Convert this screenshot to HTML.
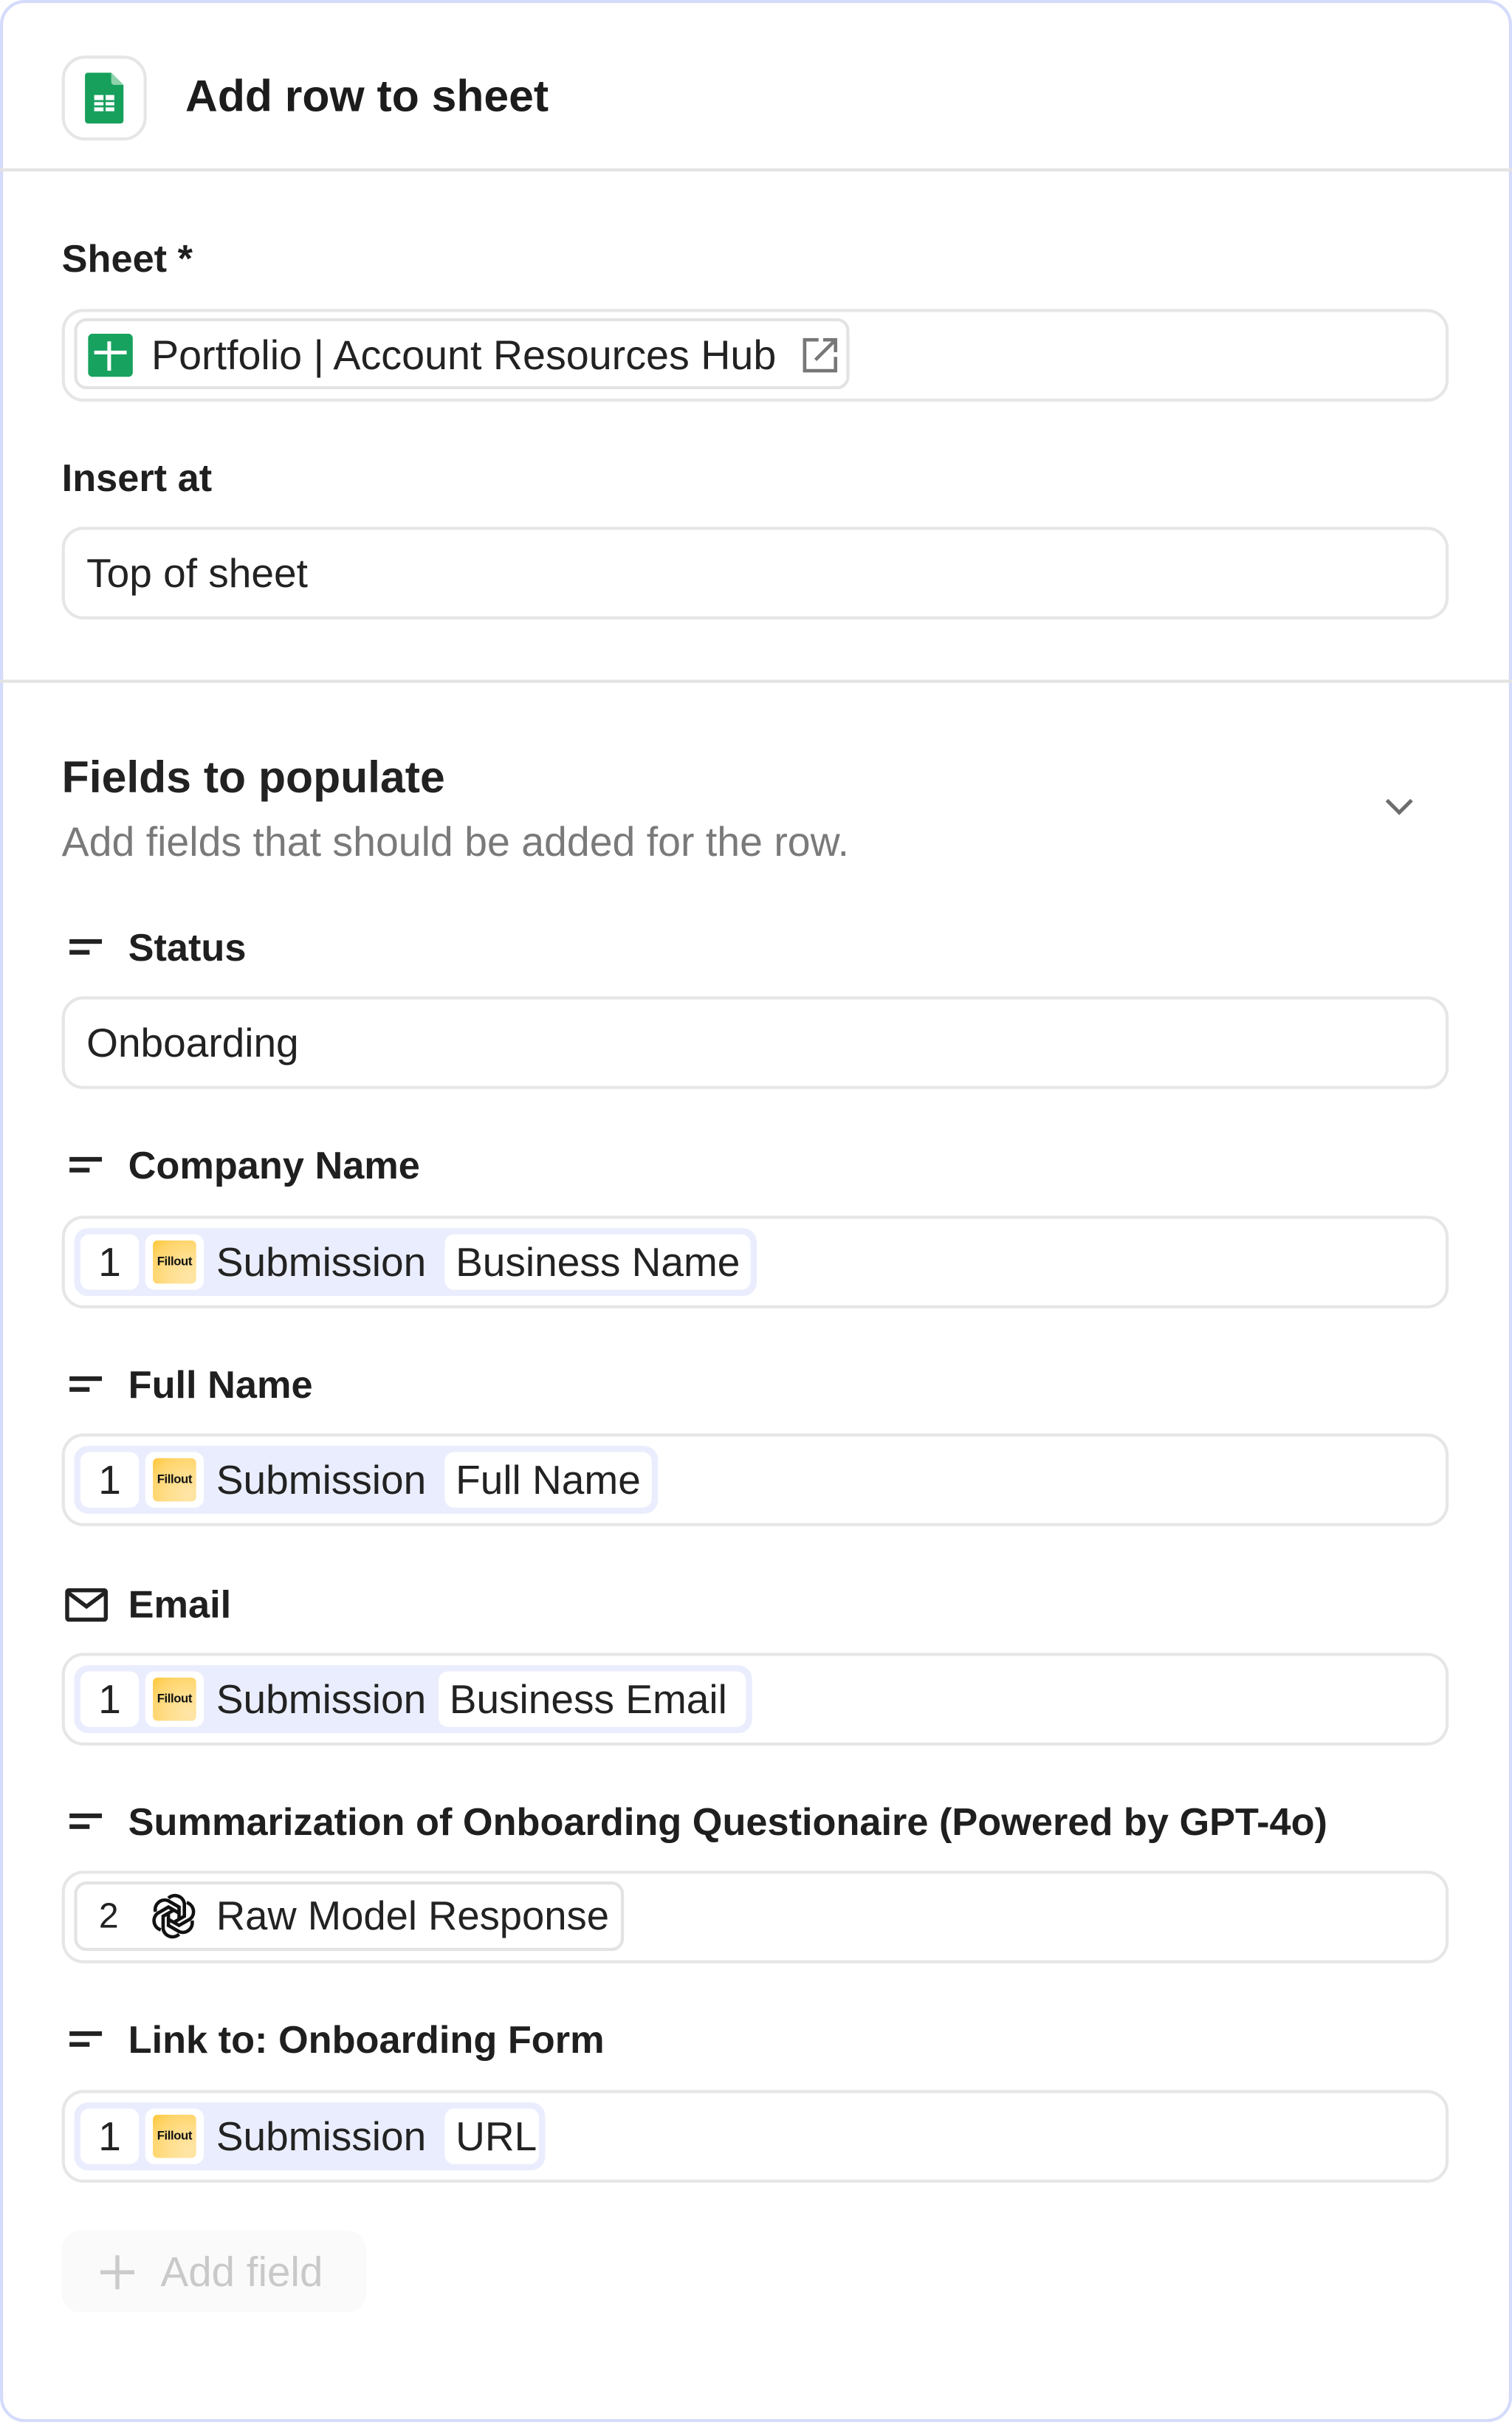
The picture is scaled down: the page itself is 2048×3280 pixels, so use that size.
<!DOCTYPE html>
<html><head><meta charset="utf-8">
<style>
html,body{margin:0;padding:0;background:#fff;width:2048px;height:3280px;overflow:hidden}
#w{position:absolute;left:0;top:0;width:979px;height:1568px;transform:scale(2.09193);transform-origin:0 0;font-family:"Liberation Sans",sans-serif;color:#1f1f1f}
.card{position:absolute;left:0;top:0;width:975px;height:1564px;border:2px solid #d4dbfb;border-radius:16px;background:#fff}
.a{position:absolute;white-space:nowrap}
.hr{position:absolute;left:0;width:979px;height:1.5px;background:#e3e3e3}
.lbl{position:absolute;left:40px;font-size:25px;font-weight:bold;line-height:30px;white-space:nowrap}
.flbl{position:absolute;left:83px;font-size:25px;font-weight:bold;line-height:30px;white-space:nowrap}
.inp{position:absolute;left:40px;width:894px;height:56px;border:2px solid #e6e6e6;border-radius:14px;background:#fff}
.itxt{position:absolute;left:14px;top:0;line-height:56px;font-size:26.3px;color:#222;white-space:nowrap}
.ic{position:absolute;left:45px}
.ic i{position:absolute;left:0;height:2.5px;background:#222;display:block}
.chip{position:absolute;left:6px;top:6px;height:44px;background:#eaedfd;border-radius:9px}
.wb{position:absolute;top:4px;height:36px;background:#fff;border-radius:6px;font-size:26.3px;line-height:36px;color:#222;white-space:nowrap}
.fo{position:absolute;left:5px;top:4px;width:28px;height:28px;border-radius:3px;background:radial-gradient(circle at 85% 85%,#ffe6a8 0,#ffdf8e 40%,#ffd46a 75%,#ffc838 100%);font-size:8px;font-weight:bold;color:#111;text-align:center;line-height:28px;letter-spacing:-0.2px}
.sub{position:absolute;font-size:26.3px;line-height:44px;color:#222;top:0;white-space:nowrap}
</style></head><body>
<div id="w">
<div class="card"></div>
<div class="a" style="left:40px;top:36px;width:51px;height:51px;border:2px solid #e6e6e6;border-radius:15px"></div>
<svg class="a" style="left:55px;top:47px" width="25" height="33" viewBox="0 0 25 33">
<path d="M2 0H17L25 8V31a2 2 0 0 1-2 2H2a2 2 0 0 1-2-2V2a2 2 0 0 1 2-2z" fill="#16a05c"/>
<path d="M17 0V6a2 2 0 0 0 2 2H25z" fill="#8ed1ab"/>
<rect x="6" y="14.5" width="13" height="10.5" fill="#fff"/>
<g fill="#16a05c"><rect x="12" y="14.5" width="1.4" height="10.5"/><rect x="6" y="17.8" width="13" height="1.3"/><rect x="6" y="21.2" width="13" height="1.3"/></g>
</svg>
<div class="a" style="left:120px;top:45px;font-size:29px;font-weight:bold;line-height:36px;color:#1c1c1c">Add row to sheet</div>
<div class="hr" style="top:109px"></div>
<div class="lbl" style="top:153px">Sheet *</div>
<div class="inp" style="top:200px">
 <div class="a" style="left:6px;top:4px;width:498px;height:42px;border:2px solid #e3e3e3;border-radius:8px"></div>
 <svg class="a" style="left:15px;top:14px" width="29" height="28" viewBox="0 0 29 28"><rect width="29" height="28" rx="3" fill="#17a25f"/><rect x="4" y="11" width="21" height="2.4" fill="#fff"/><rect x="12.5" y="5" width="2.4" height="19" fill="#fff"/></svg>
 <div class="a" style="left:56px;top:0;line-height:56px;font-size:26.6px;color:#222">Portfolio | Account Resources Hub</div>
 <svg class="a" style="left:477px;top:16px" width="24" height="24" viewBox="0 0 24 24" fill="none" stroke="#777" stroke-width="2.2"><path d="M11 2H2V22H22V13"/><path d="M9 15L22 2M14 2H22V10"/></svg>
</div>
<div class="lbl" style="top:295px">Insert at</div>
<div class="inp" style="top:341px"><div class="itxt">Top of sheet</div></div>
<div class="hr" style="top:440px"></div>
<div class="a" style="left:40px;top:486px;font-size:29px;font-weight:bold;line-height:36px;color:#222">Fields to populate</div>
<div class="a" style="left:40px;top:530px;font-size:26.5px;line-height:30px;color:#7a7a7a">Add fields that should be added for the row.</div>
<svg class="a" style="left:895px;top:514px" width="22" height="16" viewBox="0 0 22 16"><path d="M3 4L11 12L19 4" fill="none" stroke="#6d6d6d" stroke-width="2.4"/></svg>

<div class="ic" style="top:608px"><i style="top:0;width:21px"></i><i style="top:7px;width:13px"></i></div>
<div class="flbl" style="top:599px">Status</div>
<div class="inp" style="top:645px"><div class="itxt">Onboarding</div></div>

<div class="ic" style="top:749px"><i style="top:0;width:21px"></i><i style="top:7px;width:13px"></i></div>
<div class="flbl" style="top:740px">Company Name</div>
<div class="inp" style="top:787px">
 <div class="chip" style="width:442px">
  <div class="wb" style="left:4px;width:38px;text-align:center">1</div>
  <div class="wb" style="left:46px;width:38px"><div class="fo">Fillout</div></div>
  <div class="sub" style="left:92px">Submission</div>
  <div class="wb" style="left:240px;width:198px"><span style="position:absolute;left:7px">Business Name</span></div>
 </div>
</div>

<div class="ic" style="top:891px"><i style="top:0;width:21px"></i><i style="top:7px;width:13px"></i></div>
<div class="flbl" style="top:882px">Full Name</div>
<div class="inp" style="top:928px">
 <div class="chip" style="width:378px">
  <div class="wb" style="left:4px;width:38px;text-align:center">1</div>
  <div class="wb" style="left:46px;width:38px"><div class="fo">Fillout</div></div>
  <div class="sub" style="left:92px">Submission</div>
  <div class="wb" style="left:240px;width:134px"><span style="position:absolute;left:7px">Full Name</span></div>
 </div>
</div>

<svg class="a" style="left:42px;top:1028px" width="28" height="22" viewBox="0 0 28 22" fill="none" stroke="#222" stroke-width="2.6"><rect x="1.5" y="1.5" width="25" height="19" rx="1"/><path d="M2 3L14 12L26 3"/></svg>
<div class="flbl" style="top:1024px">Email</div>
<div class="inp" style="top:1070px">
 <div class="chip" style="width:439px">
  <div class="wb" style="left:4px;width:38px;text-align:center">1</div>
  <div class="wb" style="left:46px;width:38px"><div class="fo">Fillout</div></div>
  <div class="sub" style="left:92px">Submission</div>
  <div class="wb" style="left:236px;width:199px"><span style="position:absolute;left:7px">Business Email</span></div>
 </div>
</div>

<div class="ic" style="top:1174px"><i style="top:0;width:21px"></i><i style="top:7px;width:13px"></i></div>
<div class="flbl" style="top:1165px">Summarization of Onboarding Questionaire (Powered by GPT-4o)</div>
<div class="inp" style="top:1211px">
 <div class="a" style="left:6px;top:5px;width:352px;height:41px;border:2px solid #e3e3e3;border-radius:8px">
  <div class="a" style="left:14px;top:0;line-height:41px;font-size:23px;color:#222">2</div>
  <svg class="a" style="left:46px;top:4px" width="33" height="33" viewBox="0 0 24 24" fill="none" stroke="#111" stroke-width="1.6">
   <g transform="translate(12 12)">
    <path d="M-2.5 -8.5 a4.5 4.5 0 0 1 7.5 2.5 v6 l-5 2.9" />
    <path d="M-2.5 -8.5 a4.5 4.5 0 0 1 7.5 2.5 v6 l-5 2.9" transform="rotate(60)"/>
    <path d="M-2.5 -8.5 a4.5 4.5 0 0 1 7.5 2.5 v6 l-5 2.9" transform="rotate(120)"/>
    <path d="M-2.5 -8.5 a4.5 4.5 0 0 1 7.5 2.5 v6 l-5 2.9" transform="rotate(180)"/>
    <path d="M-2.5 -8.5 a4.5 4.5 0 0 1 7.5 2.5 v6 l-5 2.9" transform="rotate(240)"/>
    <path d="M-2.5 -8.5 a4.5 4.5 0 0 1 7.5 2.5 v6 l-5 2.9" transform="rotate(300)"/>
   </g>
  </svg>
  <div class="a" style="left:90px;top:0;line-height:41px;font-size:26px;color:#222">Raw Model Response</div>
 </div>
</div>

<div class="ic" style="top:1315px"><i style="top:0;width:21px"></i><i style="top:7px;width:13px"></i></div>
<div class="flbl" style="top:1306px">Link to: Onboarding Form</div>
<div class="inp" style="top:1353px">
 <div class="chip" style="width:305px">
  <div class="wb" style="left:4px;width:38px;text-align:center">1</div>
  <div class="wb" style="left:46px;width:38px"><div class="fo">Fillout</div></div>
  <div class="sub" style="left:92px">Submission</div>
  <div class="wb" style="left:240px;width:61px"><span style="position:absolute;left:7px">URL</span></div>
 </div>
</div>

<div class="a" style="left:40px;top:1444px;width:197px;height:53px;border-radius:12px;background:#fafafa"></div>
<svg class="a" style="left:64px;top:1459px" width="24" height="24" viewBox="0 0 24 24"><path d="M12 1V23M1 12H23" stroke="#cbcbcb" stroke-width="2.6"/></svg>
<div class="a" style="left:104px;top:1455px;font-size:27px;line-height:32px;color:#c9c9c9">Add field</div>
</div>
</body></html>
